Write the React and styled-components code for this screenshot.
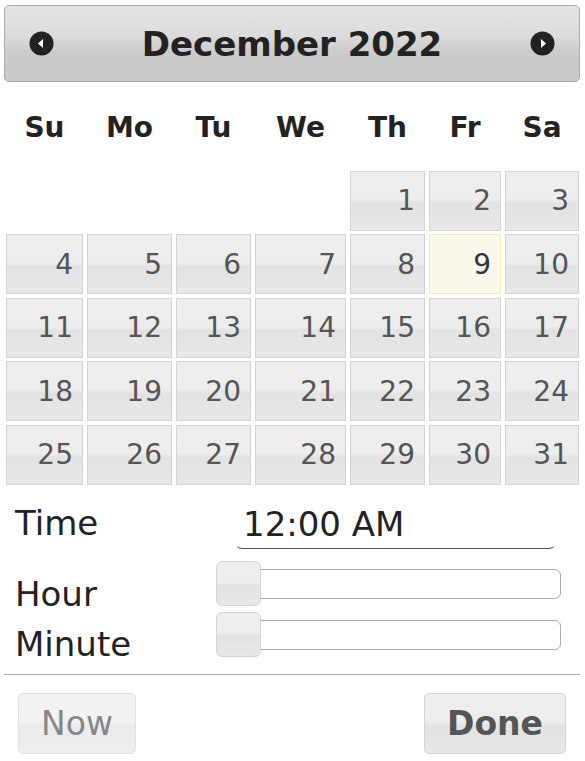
import React from 'react';
import styled, { createGlobalStyle } from 'styled-components';

const GlobalStyle = createGlobalStyle`
  html, body {
    margin: 0;
    padding: 0;
    background: #fff;
    font-family: "DejaVu Sans", Verdana, sans-serif;
  }
`;

const COLS = '77px 85px 75px 91px 75px 72px 74px';
const DAY_NAMES = ['Su', 'Mo', 'Tu', 'We', 'Th', 'Fr', 'Sa'];
const SELECTED = 9;

const Picker = styled.div`
  width: 585px;
  box-sizing: border-box;
  padding: 5px 5px 0 4px;
`;

const Header = styled.div`
  height: 77px;
  box-sizing: border-box;
  border: 1px solid #aaa;
  border-radius: 5px;
  background: linear-gradient(#e4e4e4 0%, #dcdcdc 40%, #cccccc 60%, #c9c9c9 100%);
  display: grid;
  grid-template-columns: auto 1fr auto;
  align-items: center;
  padding: 0 24px;
`;

const Title = styled.div`
  font-size: 34px;
  font-weight: bold;
  color: #222;
  text-align: center;
`;

const NavIcon = styled.svg`
  width: 25px;
  height: 25px;
  display: block;
  margin-top: -1px;
`;

const DayGrid = styled.div`
  display: grid;
  grid-template-columns: ${COLS};
  column-gap: 4px;
  row-gap: 3.5px;
  margin-left: 2px;
`;

const DayName = styled.div`
  height: 85px;
  box-sizing: border-box;
  padding-top: 6px;
  display: flex;
  align-items: center;
  justify-content: center;
  font-size: 28px;
  font-weight: bold;
  color: #222;
`;

const Cell = styled.div`
  height: 60px;
  box-sizing: border-box;
  display: flex;
  align-items: center;
  justify-content: flex-end;
  padding-right: 9px;
  font-size: 28px;
  color: ${(p) => (p.$active ? '#363636' : '#555')};
  border: 1px solid ${(p) => (p.$active ? '#fcefa1' : '#d3d3d3')};
  background: ${(p) =>
    p.$active
      ? '#fbf9ee'
      : 'linear-gradient(#eeeeee 0%, #ededed 48%, #e3e3e3 54%, #e8e8e8 100%)'};
`;

const Blank = styled.div``;

const TimePane = styled.div`
  padding: 18px 0 0 11px;
`;

const Row = styled.div`
  display: flex;
  align-items: flex-start;
  height: ${(p) => p.$h}px;
  margin-bottom: ${(p) => p.$mb || 0}px;
`;

const Label = styled.div`
  width: ${(p) => p.$w}px;
  flex: none;
  font-size: 34px;
  line-height: 40px;
  color: #222;
  margin-top: ${(p) => p.$mt}px;
`;

const TimeInput = styled.div`
  width: 321px;
  height: 46px;
  box-sizing: border-box;
  border: 1px solid transparent;
  border-bottom-color: #555;
  border-radius: 0 0 7px 7px;
  padding: 0 0 0 7px;
  font-size: 34px;
  line-height: 40px;
  color: #222;
`;

const Track = styled.div`
  position: relative;
  width: 343px;
  height: 30px;
  box-sizing: border-box;
  margin-top: ${(p) => p.$mt}px;
  border: 1px solid #aaa;
  border-radius: 6px;
  background: #fff;
`;

const Handle = styled.div`
  position: absolute;
  left: -3px;
  top: -9px;
  width: 45px;
  height: 45px;
  box-sizing: border-box;
  border: 1px solid #d3d3d3;
  border-radius: 6px;
  background: linear-gradient(#eeeeee 0%, #ededed 48%, #e3e3e3 54%, #e8e8e8 100%);
`;

const ButtonPane = styled.div`
  margin-top: 18px;
  border-top: 1px solid #aaa;
  display: flex;
  justify-content: space-between;
  padding: 18px 14px 0 14px;
`;

const Button = styled.button`
  height: 61px;
  box-sizing: border-box;
  padding: 0 ${(p) => p.$px}px;
  border: 1px solid #d3d3d3;
  border-radius: 5px;
  background: linear-gradient(#eeeeee 0%, #ededed 48%, #e3e3e3 54%, #e8e8e8 100%);
  color: #555;
  font-family: "DejaVu Sans", Verdana, sans-serif;
  font-size: 33px;
  font-weight: ${(p) => (p.$primary ? 'bold' : 'normal')};
  opacity: ${(p) => (p.$primary ? 1 : 0.7)};
`;

const Arrow = ({ dir }) => (
  <NavIcon viewBox="0 0 25 25">
    <circle cx="12.5" cy="12.5" r="12" fill="#222" />
    {dir === 'prev' ? (
      <polygon points="9,12.5 14,8 14,17" fill="#fff" />
    ) : (
      <polygon points="16,12.5 11,8 11,17" fill="#fff" />
    )}
  </NavIcon>
);

export default function App() {
  const days = [];
  for (let i = 0; i < 4; i++) days.push(<Blank key={`b${i}`} />);
  for (let d = 1; d <= 31; d++) {
    days.push(
      <Cell key={d} $active={d === SELECTED}>
        {d}
      </Cell>
    );
  }

  return (
    <>
      <GlobalStyle />
      <Picker>
        <Header>
          <Arrow dir="prev" />
          <Title>December 2022</Title>
          <Arrow dir="next" />
        </Header>

        <DayGrid>
          {DAY_NAMES.map((n) => (
            <DayName key={n}>{n}</DayName>
          ))}
          {days}
        </DayGrid>

        <TimePane>
          <Row $h={46} $mb={12}>
            <Label $w={220} $mt={0}>Time</Label>
            <TimeInput>12:00 AM</TimeInput>
          </Row>
          <Row $h={45} $mb={5}>
            <Label $w={203} $mt={13}>Hour</Label>
            <Track $mt={8}>
              <Handle />
            </Track>
          </Row>
          <Row $h={45}>
            <Label $w={203} $mt={13}>Minute</Label>
            <Track $mt={9}>
              <Handle />
            </Track>
          </Row>
        </TimePane>

        <ButtonPane>
          <Button $px={22}>Now</Button>
          <Button $px={22} $primary>Done</Button>
        </ButtonPane>
      </Picker>
    </>
  );
}
